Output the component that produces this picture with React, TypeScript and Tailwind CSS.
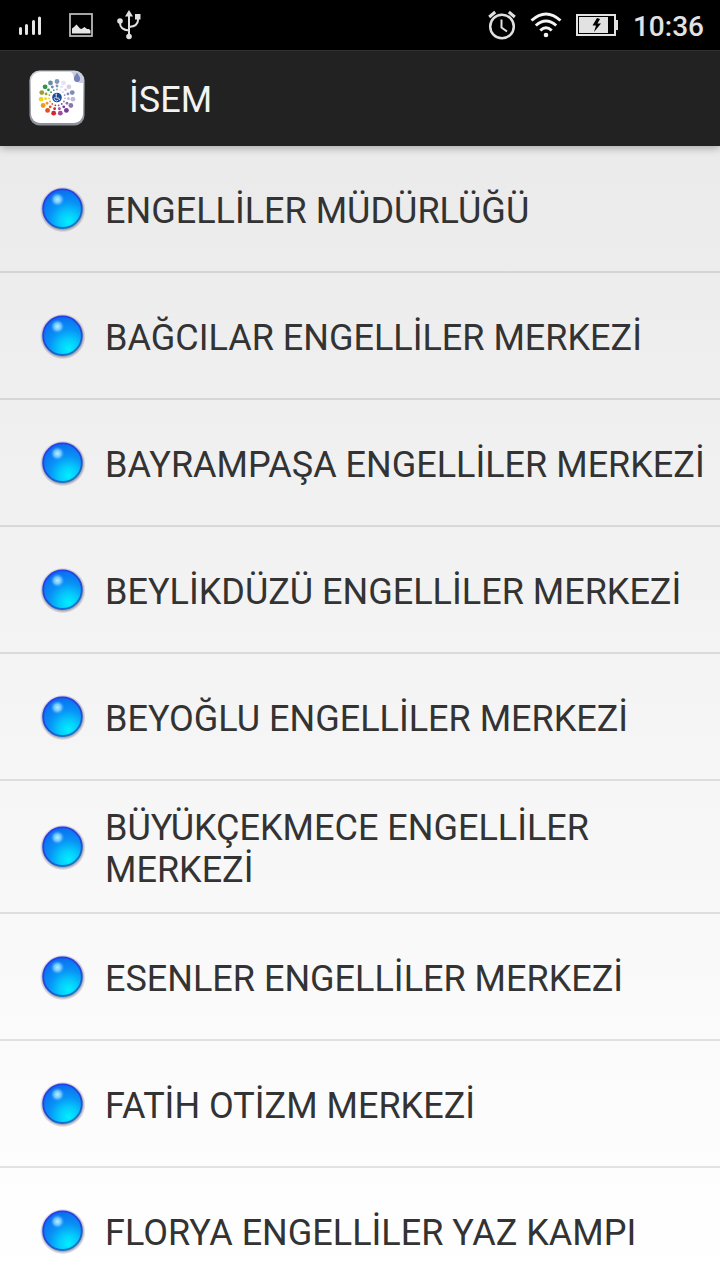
import { useId } from 'react';

const centers = [
    'ENGELLİLER MÜDÜRLÜĞÜ',
    'BAĞCILAR ENGELLİLER MERKEZİ',
    'BAYRAMPAŞA ENGELLİLER MERKEZİ',
    'BEYLİKDÜZÜ ENGELLİLER MERKEZİ',
    'BEYOĞLU ENGELLİLER MERKEZİ',
    'BÜYÜKÇEKMECE ENGELLİLER MERKEZİ',
    'ESENLER ENGELLİLER MERKEZİ',
    'FATİH OTİZM MERKEZİ',
    'FLORYA ENGELLİLER YAZ KAMPI',
];

// clockwise, starting at the top
const dotColors = [
    '#8595b8',
    '#e6e4f0',
    '#d3d0e2',
    '#7f8bb5',
    '#bdb9d6',
    '#8a76ac',
    '#743b94',
    '#a04a9c',
    '#d8242c',
    '#e2501f',
    '#f09a1c',
    '#f2d61c',
    '#96a332',
    '#2f9448',
    '#6390a0',
];

const rings = [
    { distance: 16, radius: 2.4 },
    { distance: 11.5, radius: 1.4 },
    { distance: 8, radius: 0.9 },
];

function SignalIcon() {
    return (
        <svg width="24" height="20" viewBox="0 0 24 20" stroke="#e6e6e6" strokeWidth="3" strokeLinecap="round">
            <path d="M2.5 13.5v5M8.5 10.5v8M15.5 6.5v12M21.5 3v15.5" />
        </svg>
    );
}

function PictureIcon() {
    return (
        <svg width="24" height="24" viewBox="0 0 24 24">
            <rect x="1" y="1" width="22" height="22" fill="none" stroke="#b4b8b6" strokeWidth="1.8" />
            <path d="M3 20.5v-5l2-1.5 2.5-2.500 3.500 4 1.500.5 3-2 2.500 2h2l1.500 1.500v3z" fill="#e6e6e6" />
        </svg>
    );
}

function UsbIcon() {
    return (
        <svg width="24" height="32" viewBox="0 0 24 32" fill="none" stroke="#e0e0e0" strokeWidth="2">
            <path d="M12 5v21M3 12v2c0 4 3 7 9 7.5M21 8v3c0 4-3 6.500-9 7" />
            <g fill="#e0e0e0" stroke="none">
                <path d="M12 1l4 6.5H8z" />
                <circle cx="3" cy="12" r="2.8" />
                <rect x="18" y="5" width="5.5" height="5.5" />
                <circle cx="12" cy="27.5" r="2.8" />
            </g>
        </svg>
    );
}

function AlarmIcon() {
    return (
        <svg width="28" height="30" viewBox="0 0 28 30" fill="none" stroke="#e0e0e0" strokeWidth="2.5">
            <circle cx="14" cy="16.500" r="11.8" />
            <path d="M13.5 9.5v8l5.500 4" strokeWidth="2" />
            <path d="M1.200 7l6-5M26.800 7l-6-5" strokeWidth="3" />
        </svg>
    );
}

function WifiIcon() {
    return (
        <svg width="32" height="26" viewBox="0 0 32 26" fill="none" stroke="#f4f4f4" strokeWidth="3">
            <path d="M1.5 8.5Q16-4.5 30.5 8.5M5.8 13.5Q16 4.500 26.2 13.5M10.3 18.5Q16 13 21.700 18.5" />
            <circle cx="16" cy="23" r="2.3" fill="#f4f4f4" stroke="none" />
        </svg>
    );
}

function BatteryIcon() {
    return (
        <svg width="42" height="24" viewBox="0 0 42 24">
            <rect x="1" y="2" width="38" height="20" fill="none" stroke="#e2e2e2" strokeWidth="2" />
            <rect x="39" y="7" width="3" height="10" fill="#e2e2e2" />
            <rect x="3" y="4" width="29" height="16" fill="#e2e2e2" />
            <path d="M21 5l-4.500 7.5H20L18 19l7-8.500h-3.500L24 6z" fill="#000" />
        </svg>
    );
}

function AppLogo() {
    const id = useId();

    return (
        <svg width="56" height="56" viewBox="0 0 56 56">
            <defs>
                <linearGradient id={id} x1="0" y1="0" x2="0" y2="1">
                    <stop offset="0" stopColor="#d2d4da" />
                    <stop offset="1" stopColor="#8c8f98" />
                </linearGradient>
            </defs>
            <rect x="0.5" y="0.5" width="55" height="55" rx="10" fill={`url(#${id})`} />
            <rect x="2" y="2" width="52" height="51" rx="9" fill="#fff" />
            <path d="M41 2c3 0 3 3 4 6s3 5 9 5v-2c0-6-3-9-8-9z" fill="#c9cde0" />
            <path d="M48 2.500l2.500 4c1.500 3 0 5.500-2.500 5.500s-4-2.500-2.500-5.500z" fill="#7482b8" />
            {rings.map((ring) =>
                dotColors.map((color, i) => {
                    const angle = (i * 2 * Math.PI) / dotColors.length;

                    return (
                        <circle
                            key={`${ring.distance}-${color}`}
                            cx={28 + ring.distance * Math.sin(angle)}
                            cy={27.5 - ring.distance * Math.cos(angle)}
                            r={ring.radius}
                            fill={color}
                        />
                    );
                })
            )}
            <circle cx="28" cy="27.5" r="4.8" fill="#1b4a96" />
            <g fill="none" stroke="#fff" strokeWidth="0.8">
                <path d="M27.2 24.5V28h2.5l1 2.3" />
                <path d="M26.3 27a2.1 2.1 0 1 0 3 2.8" />
            </g>
            <circle cx="27.2" cy="24.3" r="0.7" fill="#fff" />
        </svg>
    );
}

function Ball() {
    const id = useId();

    return (
        <svg className="shrink-0" width="48" height="48" viewBox="0 0 48 48">
            <defs>
                <radialGradient id={`${id}-body`} cx="0.66" cy="0.84" r="0.85">
                    <stop offset="0" stopColor="#00f0ff" />
                    <stop offset="0.3" stopColor="#05c8fc" />
                    <stop offset="0.6" stopColor="#0892f6" />
                    <stop offset="1" stopColor="#0a6cf0" />
                </radialGradient>
                <linearGradient id={`${id}-rim`} x1="0.2" y1="0" x2="0.7" y2="1">
                    <stop offset="0" stopColor="#2a3cf0" />
                    <stop offset="0.6" stopColor="#2448d8" />
                    <stop offset="1" stopColor="#1478c8" />
                </linearGradient>
                <radialGradient id={`${id}-shine`}>
                    <stop offset="0" stopColor="#b4f0ff" />
                    <stop offset="0.5" stopColor="#7cd0ff" stopOpacity="0.9" />
                    <stop offset="1" stopColor="#3c9cff" stopOpacity="0" />
                </radialGradient>
                <radialGradient id={`${id}-shadow`}>
                    <stop offset="0.84" stopColor="#303050" stopOpacity="0.5" />
                    <stop offset="1" stopColor="#303050" stopOpacity="0" />
                </radialGradient>
            </defs>
            <circle cx="23.8" cy="24.5" r="22.8" fill={`url(#${id}-shadow)`} />
            <circle cx="23.5" cy="23.7" r="19.3" fill={`url(#${id}-body)`} stroke={`url(#${id}-rim)`} strokeWidth="1.8" />
            <circle cx="18.5" cy="14.5" r="7" fill={`url(#${id}-shine)`} />
        </svg>
    );
}

function StatusBar() {
    return (
        <div className="flex h-[50px] shrink-0 items-center justify-between bg-black pr-4 pl-[18px]">
            <div className="flex items-center">
                <SignalIcon />
                <div className="ml-[27px]">
                    <PictureIcon />
                </div>
                <div className="ml-6">
                    <UsbIcon />
                </div>
            </div>
            <div className="flex items-center">
                <AlarmIcon />
                <div className="ml-[14px]">
                    <WifiIcon />
                </div>
                <div className="ml-[14px]">
                    <BatteryIcon />
                </div>
                <time className="ml-[15px] pt-1 text-[28px] leading-8 font-medium text-[#e2e2e2]">10:36</time>
            </div>
        </div>
    );
}

export default function App() {
    return (
        <div className="flex h-screen flex-col overflow-hidden bg-linear-to-b from-[#e8e8e8] to-white font-[Roboto,sans-serif]">
            <StatusBar />
            <header className="z-10 flex h-24 shrink-0 items-center gap-11 border-t border-[#303030] bg-[#222] pb-[2px] pl-[29px] shadow-[0_2px_8px_rgba(0,0,0,0.3)]">
                <AppLogo />
                <h1 className="pt-1 text-[36px] leading-[42px] text-[#f3f3f3]">İSEM</h1>
            </header>
            <main className="min-h-0 flex-1 overflow-y-auto [scrollbar-width:none]">
                <ul>
                    {centers.map((name) => (
                        <li key={name} className="border-b-2 border-black/10">
                            <button
                                type="button"
                                className="flex min-h-[125px] w-full cursor-pointer items-center gap-[18px] py-[21px] pr-3 pl-[39px] text-left"
                            >
                                <Ball />
                                <span className="pt-[5px] text-[36px] leading-[42px] text-[#333]">{name}</span>
                            </button>
                        </li>
                    ))}
                </ul>
            </main>
        </div>
    );
}
